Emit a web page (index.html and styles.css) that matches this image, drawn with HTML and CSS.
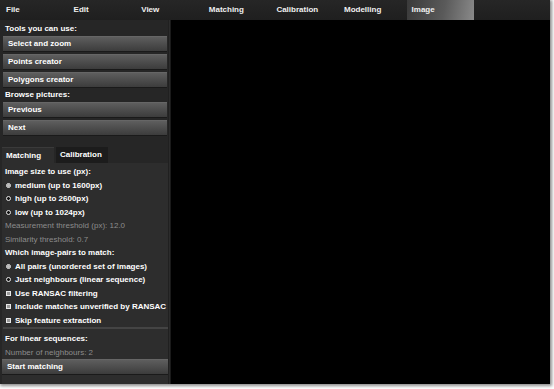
FILE: index.html
```html
<!DOCTYPE html>
<html>
<head>
<meta charset="utf-8">
<link rel="stylesheet" href="styles.css">
</head>
<body>
<div class="app">
  <div class="menubar">
    <div class="menu">File</div>
    <div class="menu">Edit</div>
    <div class="menu">View</div>
    <div class="menu">Matching</div>
    <div class="menu">Calibration</div>
    <div class="menu">Modelling</div>
    <div class="menu active">Image</div>
  </div>
  <div class="main">
    <div class="panel">
      <div class="label">Tools you can use:</div>
      <div class="btn">Select and zoom</div>
      <div class="btn">Points creator</div>
      <div class="btn">Polygons creator</div>
      <div class="label">Browse pictures:</div>
      <div class="btn">Previous</div>
      <div class="btn">Next</div>
      <div class="tabs">
        <div class="tab active">Matching</div>
        <div class="tab">Calibration</div>
      </div>
      <div class="tabbody">
        <div class="line">Image size to use (px):</div>
        <div class="line opt"><span class="radio on"></span>medium (up to 1600px)</div>
        <div class="line opt"><span class="radio"></span>high (up to 2600px)</div>
        <div class="line opt"><span class="radio"></span>low (up to 1024px)</div>
        <div class="line dim">Measurement threshold (px): 12.0</div>
        <div class="line dim">Similarity threshold: 0.7</div>
        <div class="line">Which image-pairs to match:</div>
        <div class="line opt"><span class="radio on"></span>All pairs (unordered set of images)</div>
        <div class="line opt"><span class="radio"></span>Just neighbours (linear sequence)</div>
        <div class="line opt"><span class="check"></span>Use RANSAC filtering</div>
        <div class="line opt"><span class="check"></span>Include matches unverified by RANSAC</div>
        <div class="line opt"><span class="check"></span>Skip feature extraction</div>
        <div class="sep"></div>
        <div class="line">For linear sequences:</div>
        <div class="line dim">Number of neighbours: 2</div>
        <div class="btn start">Start matching</div>
      </div>
    </div>
    <div class="divider"></div>
    <div class="canvas"></div>
  </div>
</div>
</body>
</html>
```
FILE: styles.css
```css
html, body {
  margin: 0;
  padding: 0;
  background: #ffffff;
}
body {
  width: 554px;
  height: 389px;
  overflow: hidden;
  font-family: "Liberation Sans", Arial, sans-serif;
  font-size: 8px;
  color: #ffffff;
}
.app {
  width: 550px;
  height: 384px;
  display: flex;
  flex-direction: column;
  background: #242424;
  box-shadow: 1px 1px 3px 1px rgba(0,0,0,0.45);
}
.menubar {
  height: 20px;
  flex: none;
  display: flex;
  padding-left: 1px;
  background: linear-gradient(#262626, #1f1f1f);
}
.menu {
  width: 67.6px;
  box-sizing: border-box;
  padding-left: 5px;
  line-height: 20px;
  font-weight: bold;
  color: #f0f0f0;
}
.menu.active {
  background: linear-gradient(100deg, #3a3a3a 0%, #5a5a5a 55%, #8a8a8a 100%);
}
.main {
  flex: 1;
  display: flex;
  min-height: 0;
}
.panel {
  width: 168px;
  flex: none;
  display: flex;
  flex-direction: column;
  padding-top: 1px;
  background: #262626;
}
.label {
  height: 15px;
  line-height: 15px;
  padding-left: 5px;
  font-weight: bold;
}
.btn {
  height: 15px;
  margin: 3px 1px 0 3px;
  padding-left: 5px;
  font-weight: bold;
  background: linear-gradient(#5e5e5e, #3c3c3c);
  border-top: 1px solid #666;
  box-sizing: border-box;
  line-height: 14px;
  box-shadow: 0 1px 0 #1a1a1a;
}
.label + .btn {
  margin-top: 0;
}
.tabs {
  display: flex;
  margin-top: 12px;
  padding-left: 2px;
  height: 16px;
  flex: none;
}
.tab {
  width: 52px;
  height: 16px;
  line-height: 16px;
  padding-left: 4px;
  box-sizing: border-box;
  font-weight: bold;
  background: #1c1c1c;
  margin-right: 2px;
}
.tab.active {
  background: #2d2d2d;
  border-top: 1px solid #3a3a3a;
  line-height: 15px;
}
.tabbody {
  flex: 1;
  margin-left: 2px;
  background: #2d2d2d;
  padding-top: 2px;
  display: flex;
  flex-direction: column;
}
.line {
  height: 13.5px;
  line-height: 13.5px;
  padding-left: 3px;
  font-weight: bold;
  white-space: nowrap;
  flex: none;
}
.line.dim {
  font-weight: normal;
  color: #8c8c8c;
}
.opt {
  display: flex;
  align-items: center;
}
.radio {
  width: 5px;
  height: 5px;
  border: 1px solid #e8e8e8;
  border-radius: 50%;
  box-sizing: border-box;
  margin: 0 4px 0 1px;
  background: #111;
}
.radio.on {
  background: radial-gradient(circle, #bdbdbd 0 1.2px, #333 1.6px);
}
.check {
  width: 5px;
  height: 5px;
  border: 1px solid #e8e8e8;
  box-sizing: border-box;
  margin: 0 4px 0 1px;
  background: #9a9a9a;
}
.sep {
  height: 2px;
  flex: none;
  margin: 0 0 3px 1px;
  background: #444;
}
.btn.start {
  margin: 0;
}
.divider {
  width: 3px;
  flex: none;
  background: linear-gradient(90deg, #1a1a1a, #2c2c2c 50%, #111);
}
.canvas {
  flex: 1;
  background: #000;
}
```
